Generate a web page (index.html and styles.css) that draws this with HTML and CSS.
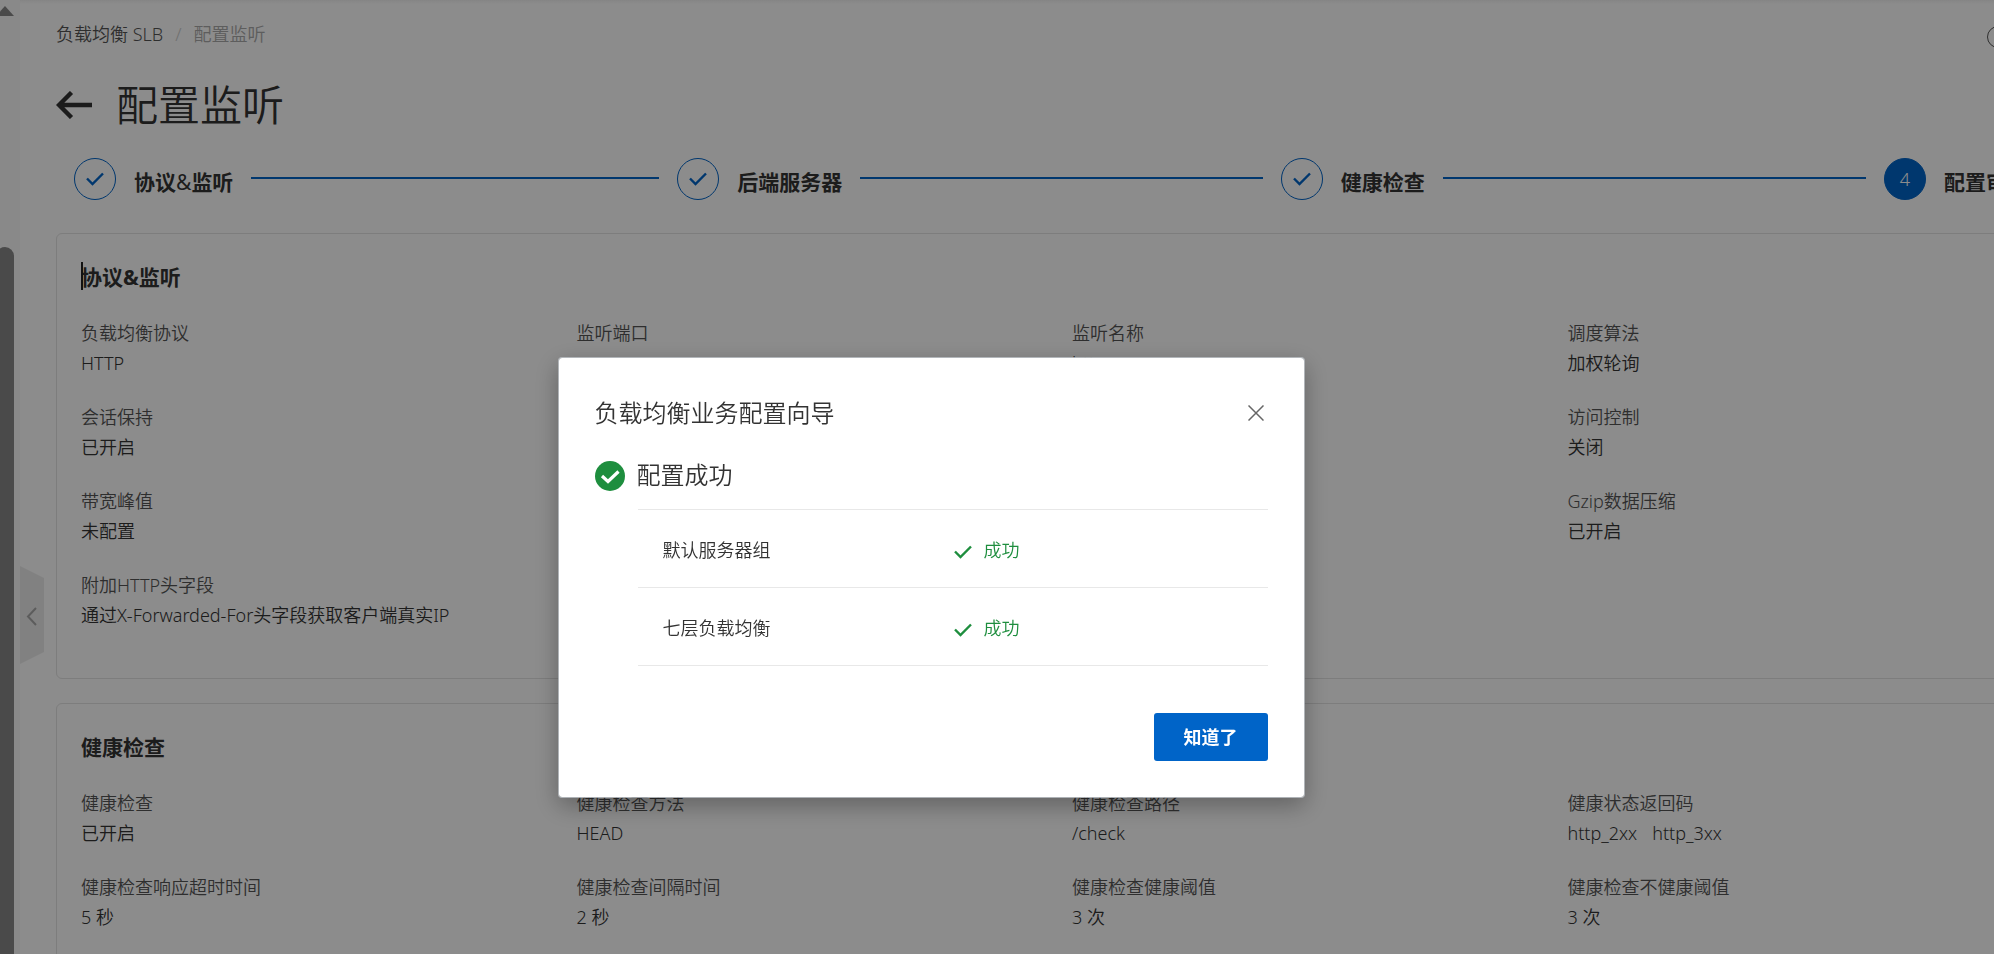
FILE: index.html
```html
<!DOCTYPE html>
<html lang="zh-CN">
<head>
<meta charset="utf-8">
<title>配置监听</title>
<link rel="stylesheet" href="styles.css">
</head>
<body>
<div class="app">
  <aside class="rail">
    <span class="rail-arrow"></span>
    <span class="rail-thumb"></span>
  </aside>
  <button class="collapse" type="button" aria-label="收起">
    <svg width="24" height="98" viewBox="0 0 24 98"><path d="M0 0L24 12V86L0 98z" fill="#ebebeb"/><path d="M16 42L8 50.500L16 59" fill="none" stroke="#a8a8a8" stroke-width="2"/></svg>
  </button>
  <main class="main">
    <nav class="crumbs">
      <a class="crumb" href="#">负载均衡 SLB</a>
      <span class="slash">/</span>
      <span class="crumb-current">配置监听</span>
      <span class="help"></span>
    </nav>
    <header class="title-row">
      <button class="back" type="button" aria-label="返回">
        <svg width="36" height="28" viewBox="0 0 36 28"><path d="M36 14H3M15.500 1.500L3 14L15.500 26.500" fill="none" stroke="#333" stroke-width="4.400"/></svg>
      </button>
      <h1 class="title">配置监听</h1>
    </header>
    <ol class="steps">
      <li class="step"><span class="dot"><svg width="18" height="14" viewBox="0 0 18 14"><path d="M1 6.500L6.500 12L17 1.500" fill="none" stroke="#0064c8" stroke-width="2.400"/></svg></span><span class="step-label">协议<span class="amp">&amp;</span>监听</span></li>
      <li class="step"><span class="dot"><svg width="18" height="14" viewBox="0 0 18 14"><path d="M1 6.500L6.500 12L17 1.500" fill="none" stroke="#0064c8" stroke-width="2.400"/></svg></span><span class="step-label">后端服务器</span></li>
      <li class="step"><span class="dot"><svg width="18" height="14" viewBox="0 0 18 14"><path d="M1 6.500L6.500 12L17 1.500" fill="none" stroke="#0064c8" stroke-width="2.400"/></svg></span><span class="step-label">健康检查</span></li>
      <li class="step last"><span class="dot current">4</span><span class="step-label">配置审核</span></li>
    </ol>
    <section class="card">
      <h2 class="card-title caret">协议&amp;监听</h2>
      <dl class="fields">
        <div class="field"><dt>负载均衡协议</dt><dd>HTTP</dd></div>
        <div class="field"><dt>监听端口</dt><dd></dd></div>
        <div class="field"><dt>监听名称</dt><dd>http</dd></div>
        <div class="field"><dt>调度算法</dt><dd>加权轮询</dd></div>
        <div class="field"><dt>会话保持</dt><dd>已开启</dd></div>
        <div class="field end"><dt>访问控制</dt><dd>关闭</dd></div>
        <div class="field"><dt>带宽峰值</dt><dd>未配置</dd></div>
        <div class="field end"><dt>Gzip数据压缩</dt><dd>已开启</dd></div>
        <div class="field"><dt>附加HTTP头字段</dt><dd>通过X-Forwarded-For头字段获取客户端真实IP</dd></div>
      </dl>
    </section>
    <section class="card">
      <h2 class="card-title">健康检查</h2>
      <dl class="fields">
        <div class="field"><dt>健康检查</dt><dd>已开启</dd></div>
        <div class="field"><dt>健康检查方法</dt><dd>HEAD</dd></div>
        <div class="field"><dt>健康检查路径</dt><dd>/check</dd></div>
        <div class="field"><dt>健康状态返回码</dt><dd class="codes"><span>http_2xx</span><span>http_3xx</span></dd></div>
        <div class="field"><dt>健康检查响应超时时间</dt><dd>5 秒</dd></div>
        <div class="field"><dt>健康检查间隔时间</dt><dd>2 秒</dd></div>
        <div class="field"><dt>健康检查健康阈值</dt><dd>3 次</dd></div>
        <div class="field"><dt>健康检查不健康阈值</dt><dd>3 次</dd></div>
      </dl>
    </section>
  </main>
</div>
<div class="overlay">
  <div class="dialog" role="dialog" aria-labelledby="dialog-title">
    <div class="dialog-head">
      <h2 class="dialog-title" id="dialog-title">负载均衡业务配置向导</h2>
      <button class="close" type="button" aria-label="关闭">
        <svg width="16" height="16" viewBox="0 0 16 16"><path d="M.5 .5L15.500 15.500M15.500 .5L.5 15.500" fill="none" stroke="#666" stroke-width="1.500"/></svg>
      </button>
    </div>
    <div class="result">
      <svg width="30" height="30" viewBox="0 0 30 30"><circle cx="15" cy="15" r="15" fill="#1e8e3e"/><path d="M7 15L13 20.500L23.500 10.500" fill="none" stroke="#fff" stroke-width="3.200"/></svg>
      <h3 class="result-title">配置成功</h3>
    </div>
    <table class="checks">
      <tr><td class="name">默认服务器组</td><td><span class="ok"><svg width="18" height="14" viewBox="0 0 18 14"><path d="M1 6.500L6.500 12L17 1.500" fill="none" stroke="#1e8e3e" stroke-width="2.400"/></svg>成功</span></td></tr>
      <tr><td class="name">七层负载均衡</td><td><span class="ok"><svg width="18" height="14" viewBox="0 0 18 14"><path d="M1 6.500L6.500 12L17 1.500" fill="none" stroke="#1e8e3e" stroke-width="2.400"/></svg>成功</span></td></tr>
    </table>
    <div class="dialog-foot"><button class="primary" type="button">知道了</button></div>
  </div>
</div>
</body>
</html>
```
FILE: styles.css
```css
* { box-sizing: border-box; }
html, body { height: 100%; }
body {
  margin: 0;
  overflow: hidden;
  background: #fff;
  color: #333;
  font: 350 18px/30px "Noto Sans", "Noto Sans CJK SC", sans-serif;
}
h1, h2, h3, dl, dd, ol { margin: 0; padding: 0; font-weight: 350; }
button { border: 0; padding: 0; background: none; font: inherit; cursor: pointer; }
svg { display: block; flex: none; }

.app { display: flex; height: 100%; overflow: hidden; position: relative; }

.rail { flex: none; width: 20px; position: relative; overflow: hidden; background: #fafafa; }
.rail-arrow {
  position: absolute; left: -4px; top: 6px;
  border: solid transparent; border-width: 0 9px 10px;
  border-bottom-color: #888;
}
.rail-thumb {
  position: absolute; left: -4px; top: 247px; bottom: -9px; width: 18px;
  border-radius: 9px; background: #888;
}
.collapse { position: absolute; left: 20px; top: 566px; }

.main {
  flex: 1;
  min-width: 0;
  /* the content runs past the right edge of the window */
  margin-right: -94px;
  padding: 0 0 0 36px;
  background: linear-gradient(#f2f2f2, #fff 4px);
}
.crumbs { display: flex; gap: 12px; padding-top: 19px; position: relative; }
.crumb { color: #555; text-decoration: none; }
.slash, .crumb-current { color: #aaa; }
.slash { color: #ccc; }
.help {
  position: absolute; right: 79px; top: 26px; width: 22px; height: 22px;
  border: 1px solid #555; border-radius: 50%;
}
.title-row { display: flex; align-items: center; gap: 24px; height: 62px; margin-top: 25px; }
.title { font-size: 42px; line-height: 62px; }

.steps { display: flex; list-style: none; padding: 0 60px 0 18px; margin-top: 22px; }
.step { flex: 1; display: flex; gap: 18px; height: 42px; }
.step::after { content: ""; flex: 1; height: 2px; margin: 19px 18px 0 0; background: #0064c8; }
.step.last { flex: none; }
.step.last::after { content: none; }
.dot {
  flex: none; display: flex; align-items: center; justify-content: center;
  width: 42px; height: 42px; border: 1px solid #0064c8; border-radius: 50%;
}
.dot.current { background: #0064c8; color: #fff; }
.step-label { flex: none; font-size: 21px; line-height: 48px; font-weight: 700; }
.amp { font-weight: 400; }

.card { border: 1px solid #e3e3e3; border-radius: 6px; padding: 28px 24px 48px; margin-top: 33px; }
.card + .card { margin-top: 24px; }
.card-title { position: relative; font-size: 21px; line-height: 30px; font-weight: 700; }
.caret::before {
  content: ""; position: absolute; left: 0; top: 0; width: 2px; height: 28px; background: #222;
}
.fields { display: grid; grid-template-columns: repeat(4, 1fr); row-gap: 24px; margin-top: 26px; }
.field { min-height: 60px; white-space: nowrap; min-width: 0; }
.field.end { grid-column: 4; }
dt { color: #555; }
.codes { display: flex; gap: 15px; }

.overlay {
  position: fixed; inset: 0;
  display: flex; align-items: flex-start; justify-content: center;
  padding: 357px 132px 0 0;
  background: rgba(0, 0, 0, .45);
}
.dialog {
  width: 747px; padding: 36px;
  background: #fff; background-clip: padding-box;
  border: 1px solid rgba(190, 195, 200, .8); border-radius: 4px;
  box-shadow: 0 8px 24px rgba(0, 0, 0, .3);
}
.dialog-head { display: flex; justify-content: space-between; align-items: center; height: 38px; padding-right: 4px; }
.dialog-title { font-size: 24px; line-height: 36px; }
.result-title { font-size: 24px; line-height: 34px; padding-bottom: 2px; }
.result { display: flex; align-items: center; gap: 12px; height: 36px; margin-top: 26px; }
.checks {
  width: calc(100% - 43px); margin: 15px 0 0 43px;
  border-collapse: collapse; border-top: 1px solid #e8e8e8;
}
.checks td { height: 78px; padding: 2px 0 0; border-bottom: 1px solid #e8e8e8; }
.checks .name { width: 316px; padding-left: 25px; }
.ok { display: flex; align-items: center; gap: 12px; color: #1e8e3e; }
.ok svg { margin-top: 4px; }
.dialog-foot { display: flex; justify-content: flex-end; margin-top: 47px; }
.primary {
  height: 48px; padding: 0 30px; border-radius: 3px;
  background: #0064c8; color: #fff; font-weight: 700;
}
```
